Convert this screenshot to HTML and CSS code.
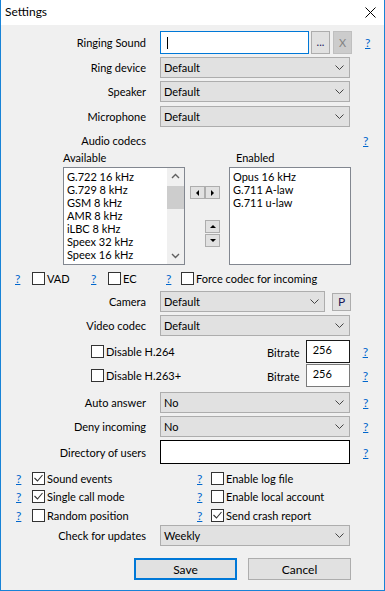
FILE: index.html
```html
<!DOCTYPE html>
<html>
<head>
    <meta charset="utf-8">
    <title>Settings</title>
    <link rel="stylesheet" href="styles.css">
</head>

<body>
    <div class="window">
        <div class="titlebar">
            <span class="title">Settings</span>
            <svg class="close" width="11" height="11" viewBox="0 0 11 11"><path d="M0.5 0.5 L10.5 10.5 M10.5 0.5 L0.5 10.5" stroke="#000" stroke-width="1"/></svg>
        </div>

        <div class="content">
            <div class="row r-ring">
                <div class="label">Ringing Sound</div>
                <div class="edit focus"><span class="caret"></span></div>
                <div class="btn tiny dots">...</div>
                <div class="btn tiny disabled">X</div>
                <a class="help">?</a>
            </div>

            <div class="row r-gap3">
                <div class="label">Ring device</div>
                <div class="combo"><span>Default</span><svg class="chev" width="9" height="5" viewBox="0 0 9 5"><polyline points="0.5,0.5 4.5,4.5 8.5,0.5" fill="none" stroke="#444"/></svg></div>
            </div>
            <div class="row r-gap3">
                <div class="label">Speaker</div>
                <div class="combo"><span>Default</span><svg class="chev" width="9" height="5" viewBox="0 0 9 5"><polyline points="0.5,0.5 4.5,4.5 8.5,0.5" fill="none" stroke="#444"/></svg></div>
            </div>
            <div class="row r-gap4">
                <div class="label">Microphone</div>
                <div class="combo"><span>Default</span><svg class="chev" width="9" height="5" viewBox="0 0 9 5"><polyline points="0.5,0.5 4.5,4.5 8.5,0.5" fill="none" stroke="#444"/></svg></div>
            </div>

            <div class="row r-audio">
                <div class="label">Audio codecs</div>
                <div class="spacer"></div>
                <a class="help">?</a>
            </div>

            <div class="codec-head">
                <div class="head-avail">Available</div>
                <div class="head-enab">Enabled</div>
            </div>

            <div class="codecs">
                <div class="list">
                    <div class="items">
                        <div>G.722 16 kHz</div>
                        <div>G.729 8 kHz</div>
                        <div>GSM 8 kHz</div>
                        <div>AMR 8 kHz</div>
                        <div>iLBC 8 kHz</div>
                        <div>Speex 32 kHz</div>
                        <div>Speex 16 kHz</div>
                    </div>
                    <div class="scrollbar">
                        <svg class="sb-arrow" width="17" height="17" viewBox="0 0 17 17"><polyline points="5,10 8.5,6.5 12,10" fill="none" stroke="#606060" stroke-width="1.4"/></svg>
                        <div class="thumb"></div>
                        <div class="track"></div>
                        <svg class="sb-arrow" width="17" height="17" viewBox="0 0 17 17"><polyline points="5,7 8.5,10.5 12,7" fill="none" stroke="#606060" stroke-width="1.4"/></svg>
                    </div>
                </div>

                <div class="movers">
                    <div class="lr">
                        <div class="mini"><span class="tri-left"></span></div>
                        <div class="mini"><span class="tri-right"></span></div>
                    </div>
                    <div class="ud">
                        <div class="mini"><span class="tri-up"></span></div>
                        <div class="mini"><span class="tri-down"></span></div>
                    </div>
                </div>

                <div class="list enabled">
                    <div class="items">
                        <div>Opus 16 kHz</div>
                        <div>G.711 A-law</div>
                        <div>G.711 u-law</div>
                    </div>
                </div>
            </div>

            <div class="row r-flags">
                <div class="flag f1"><a class="help">?</a><span class="cb"></span><span class="cb-text">VAD</span></div>
                <div class="flag f2"><a class="help">?</a><span class="cb"></span><span class="cb-text">EC</span></div>
                <div class="flag f3"><a class="help">?</a><span class="cb"></span><span class="cb-text">Force codec for incoming</span></div>
            </div>

            <div class="row r-camera">
                <div class="label">Camera</div>
                <div class="combo short"><span>Default</span><svg class="chev" width="9" height="5" viewBox="0 0 9 5"><polyline points="0.5,0.5 4.5,4.5 8.5,0.5" fill="none" stroke="#444"/></svg></div>
                <div class="btn pbtn">P</div>
            </div>
            <div class="row r-gap3">
                <div class="label">Video codec</div>
                <div class="combo"><span>Default</span><svg class="chev" width="9" height="5" viewBox="0 0 9 5"><polyline points="0.5,0.5 4.5,4.5 8.5,0.5" fill="none" stroke="#444"/></svg></div>
            </div>

            <div class="row r-h264">
                <span class="cb"></span><span class="cb-text grow">Disable H.264</span>
                <span class="bitrate">Bitrate</span>
                <div class="num dark">256</div>
                <a class="help">?</a>
            </div>
            <div class="row r-h263">
                <span class="cb"></span><span class="cb-text grow">Disable H.263+</span>
                <span class="bitrate">Bitrate</span>
                <div class="num">256</div>
                <a class="help">?</a>
            </div>

            <div class="row r-auto">
                <div class="label">Auto answer</div>
                <div class="combo"><span>No</span><svg class="chev" width="9" height="5" viewBox="0 0 9 5"><polyline points="0.5,0.5 4.5,4.5 8.5,0.5" fill="none" stroke="#444"/></svg></div>
                <a class="help">?</a>
            </div>
            <div class="row r-gap3">
                <div class="label">Deny incoming</div>
                <div class="combo"><span>No</span><svg class="chev" width="9" height="5" viewBox="0 0 9 5"><polyline points="0.5,0.5 4.5,4.5 8.5,0.5" fill="none" stroke="#444"/></svg></div>
                <a class="help">?</a>
            </div>
            <div class="row r-dir">
                <div class="label">Directory of users</div>
                <div class="edit dark"></div>
                <a class="help">?</a>
            </div>

            <div class="checks">
                <div class="check-row">
                    <div class="opt left"><a class="help">?</a><span class="cb on"><svg width="11" height="11" viewBox="0 0 11 11"><polyline points="1.5,5 4.5,8 9.5,2" fill="none" stroke="#333" stroke-width="1.1"/></svg></span><span class="cb-text">Sound events</span></div>
                    <div class="opt right"><a class="help">?</a><span class="cb"></span><span class="cb-text">Enable log file</span></div>
                </div>
                <div class="check-row">
                    <div class="opt left"><a class="help">?</a><span class="cb on"><svg width="11" height="11" viewBox="0 0 11 11"><polyline points="1.5,5 4.5,8 9.5,2" fill="none" stroke="#333" stroke-width="1.1"/></svg></span><span class="cb-text">Single call mode</span></div>
                    <div class="opt right"><a class="help">?</a><span class="cb"></span><span class="cb-text">Enable local account</span></div>
                </div>
                <div class="check-row">
                    <div class="opt left"><a class="help">?</a><span class="cb"></span><span class="cb-text">Random position</span></div>
                    <div class="opt right"><a class="help">?</a><span class="cb on"><svg width="11" height="11" viewBox="0 0 11 11"><polyline points="1.5,5 4.5,8 9.5,2" fill="none" stroke="#333" stroke-width="1.1"/></svg></span><span class="cb-text">Send crash report</span></div>
                </div>
            </div>

            <div class="row r-updates">
                <div class="label">Check for updates</div>
                <div class="combo"><span>Weekly</span><svg class="chev" width="9" height="5" viewBox="0 0 9 5"><polyline points="0.5,0.5 4.5,4.5 8.5,0.5" fill="none" stroke="#444"/></svg></div>
            </div>

            <div class="actions">
                <div class="btn action default">Save</div>
                <div class="btn action">Cancel</div>
            </div>
        </div>
    </div>
</body>
</html>
```

FILE: styles.css
```css
body {
    margin: 0;
    padding: 0;
    font-family: Lato, "Liberation Sans", sans-serif;
    font-size: 11px;
    color: #000;
}

.window {
    width: 383px;
    height: 590px;
    border: 1px solid #1883d7;
    border-top: none;
    background-color: #f0f0f0;
    display: flex;
    flex-direction: column;
}

.titlebar {
    height: 25px;
    background-color: #fff;
    display: flex;
    align-items: center;
    padding-left: 4px;
    padding-right: 8px;
}

.title {
    flex: 1;
    font-size: 12px;
    margin-top: -2px;
}

.close {
    margin-top: -1px;
}

.content {
    display: flex;
    flex-direction: column;
}

.row {
    display: flex;
    align-items: center;
    height: 21px;
}

.label {
    width: 145px;
    margin-right: 14px;
    text-align: right;
}

.help {
    color: #0066cc;
    text-decoration: underline;
    margin-left: 13px;
    font-size: 12px;
    cursor: pointer;
}

.spacer {
    width: 190px;
}

/* rows, top to bottom */
.r-ring {
    margin-top: 6px;
    height: 23px;
}

.r-gap3 {
    margin-top: 3px;
}

.r-gap4 {
    margin-top: 4px;
}

.r-audio {
    margin-top: 6px;
    height: 14px;
}

.r-flags {
    margin-top: 6px;
    height: 14px;
    padding-left: 14px;
}

.r-camera {
    margin-top: 6px;
}

.r-h264 {
    margin-top: 4px;
    height: 23px;
    padding-left: 90px;
    padding-right: 16px;
}

.r-h263 {
    margin-top: 1px;
    height: 23px;
    padding-left: 90px;
    padding-right: 16px;
}

.r-auto {
    margin-top: 5px;
}

.r-dir {
    margin-top: 3px;
    height: 24px;
}

.r-updates {
    margin-top: 3px;
}

/* controls */
.edit {
    width: 190px;
    height: 100%;
    box-sizing: border-box;
    background-color: #fff;
    border: 1px solid #7a7a7a;
    display: flex;
    align-items: center;
    padding-left: 6px;
}

.edit.focus {
    width: 149px;
    border-color: #0078d7;
}

.edit.dark {
    border-color: #000;
}

.caret {
    width: 1px;
    height: 12px;
    background-color: #000;
}

.combo {
    width: 190px;
    height: 21px;
    box-sizing: border-box;
    background-color: #e1e1e1;
    border: 1px solid #adadad;
    display: flex;
    align-items: center;
    padding-left: 3px;
    padding-right: 5px;
}

.combo span {
    flex: 1;
}

.combo.short {
    width: 165px;
}

.btn {
    background-color: #e1e1e1;
    border: 1px solid #adadad;
    box-sizing: border-box;
    display: flex;
    justify-content: center;
    align-items: center;
}

.tiny {
    width: 19px;
    height: 23px;
}

.dots {
    margin-left: 2px;
    color: #1a1a5a;
    padding-bottom: 2px;
}

.disabled {
    margin-left: 3px;
    background-color: #cccccc;
    border-color: #bfbfbf;
    color: #838383;
}

.pbtn {
    width: 19px;
    height: 18px;
    margin-left: 7px;
    color: #1a1a5a;
    font-size: 12px;
}

/* codec lists */
.codec-head {
    display: flex;
    margin-top: 4px;
    height: 13px;
    line-height: 13px;
    padding-left: 62px;
}

.head-avail {
    width: 173px;
}

.codecs {
    display: flex;
    margin-top: 3px;
    padding-left: 62px;
    height: 98px;
}

.list {
    width: 122px;
    height: 98px;
    box-sizing: border-box;
    background-color: #fff;
    border: 1px solid #828790;
    display: flex;
}

.list.enabled {
    margin-left: 8px;
    width: 122px;
}

.items {
    flex: 1;
    padding-top: 2px;
    padding-left: 3px;
    line-height: 13px;
    overflow: hidden;
}

.scrollbar {
    width: 17px;
    background-color: #f0f0f0;
    display: flex;
    flex-direction: column;
}

.thumb {
    height: 23px;
    margin-top: 1px;
    background-color: #cdcdcd;
}

.track {
    flex: 1;
}

.movers {
    margin-left: 5px;
    width: 31px;
    display: flex;
    flex-direction: column;
}

.lr {
    display: flex;
    margin-top: 19px;
}

.ud {
    display: flex;
    flex-direction: column;
    gap: 1px;
    margin-top: 21px;
    margin-left: 15px;
}

.mini {
    width: 15px;
    height: 13px;
    box-sizing: border-box;
    background-color: #e1e1e1;
    border: 1px solid #adadad;
    display: flex;
    justify-content: center;
    align-items: center;
}

.tri-left {
    border-top: 3px solid transparent;
    border-bottom: 3px solid transparent;
    border-right: 3px solid #000;
}

.tri-right {
    border-top: 3px solid transparent;
    border-bottom: 3px solid transparent;
    border-left: 3px solid #000;
}

.tri-up {
    border-left: 3px solid transparent;
    border-right: 3px solid transparent;
    border-bottom: 3px solid #000;
}

.tri-down {
    border-left: 3px solid transparent;
    border-right: 3px solid transparent;
    border-top: 3px solid #000;
}

/* checkboxes */
.cb {
    width: 13px;
    height: 13px;
    box-sizing: border-box;
    border: 1px solid #333;
    background-color: #fff;
    display: flex;
    justify-content: center;
    align-items: center;
    flex-shrink: 0;
}

.cb-text {
    margin-left: 2px;
}

.grow {
    flex: 1;
}

.flag {
    display: flex;
    align-items: center;
}

.flag .help,
.opt .help {
    margin-left: 0;
}

.f1 {
    width: 76px;
}

.f1 .help,
.f2 .help {
    width: 17px;
}

.f2 {
    width: 75px;
}

.f3 .help {
    width: 15px;
}

.bitrate {
    margin-right: 6px;
    margin-top: 2px;
}

.num {
    width: 44px;
    height: 100%;
    box-sizing: border-box;
    background-color: #fff;
    border: 1px solid #7a7a7a;
    padding-left: 6px;
    padding-top: 2px;
}

.num.dark {
    border-color: #1a1a1a;
}

/* bottom options */
.checks {
    display: flex;
    flex-direction: column;
    margin-top: 7px;
    padding-left: 15px;
}

.check-row {
    display: flex;
    align-items: center;
    height: 14px;
    margin-bottom: 4px;
}

.check-row:last-child {
    margin-top: 1px;
    margin-bottom: 0;
}

.opt {
    display: flex;
    align-items: center;
}

.opt.left {
    width: 181px;
}

.opt.left .help {
    width: 16px;
}

.opt.right .help {
    width: 14px;
}

.actions {
    display: flex;
    gap: 11px;
    margin-top: 12px;
    padding-left: 133px;
}

.action {
    width: 103px;
    height: 22px;
    font-size: 12px;
}

.action.default {
    border: 2px solid #0078d7;
}
```
